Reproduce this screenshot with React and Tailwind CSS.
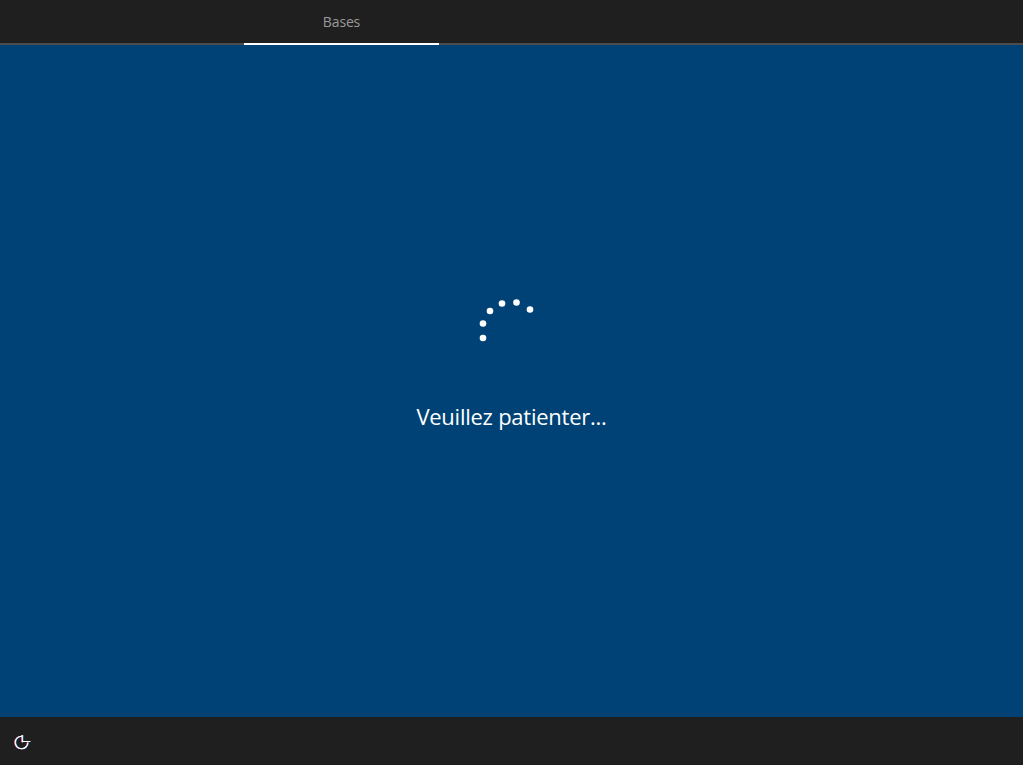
import React from 'react';

const dots = [
  [483, 338],
  [483, 323.5],
  [490, 311],
  [502, 303.5],
  [516.5, 302.5],
  [530, 309.5],
];

const App = () => {
  return (
    <div className="h-[767px] w-[1023px] overflow-hidden flex flex-col bg-[#004275] font-['Open_Sans','Noto_Sans',sans-serif]">
      {/* Top bar */}
      <div className="h-[45px] shrink-0 bg-[#1f1f1f] flex flex-col">
        <div className="h-[43px] pl-[244px]">
          <div className="w-[195px] h-[43px] flex items-center justify-center text-[14px] tracking-[-0.15px] text-[#9a9a9a]">Bases</div>
        </div>
        <div className="h-[2px] bg-[#4c4c4c] pl-[244px]">
          <div className="w-[195px] h-[2px] bg-white"></div>
        </div>
      </div>

      {/* Main */}
      <div className="flex-1 relative flex flex-col items-center">
        <svg className="absolute left-0 top-[-45px]" width="1023" height="400">
          {dots.map(([x, y]) => (
            <circle key={x + '-' + y} cx={x} cy={y} r="3.3" fill="#fff" />
          ))}
        </svg>
        <div className="mt-[355px] text-[22px] leading-[32px] tracking-[-0.25px] text-white">Veuillez patienter...</div>
      </div>

      {/* Bottom bar */}
      <div className="h-[48px] shrink-0 bg-[#1f1f1f] flex items-center pl-[14px]">
        <svg width="18" height="18" viewBox="0 0 18 18" fill="none" strokeWidth="1.1">
          <path stroke="#ff5a7a" d="M7.3 4.2A6.3 6.3 0 1 0 13.3 10.5M7.8 3v7" />
          <path stroke="#4fb4ff" d="M8.3 4.2A6.3 6.3 0 1 0 14.3 10.5M8.8 3v7" />
          <path stroke="#fff" d="M7.8 4.2A6.3 6.3 0 1 0 13.8 10.5M8.3 3v7.5M8 9.5h8.5" />
        </svg>
      </div>
      <div className="h-[2px] shrink-0 bg-white"></div>
    </div>
  );
};

export default App;
